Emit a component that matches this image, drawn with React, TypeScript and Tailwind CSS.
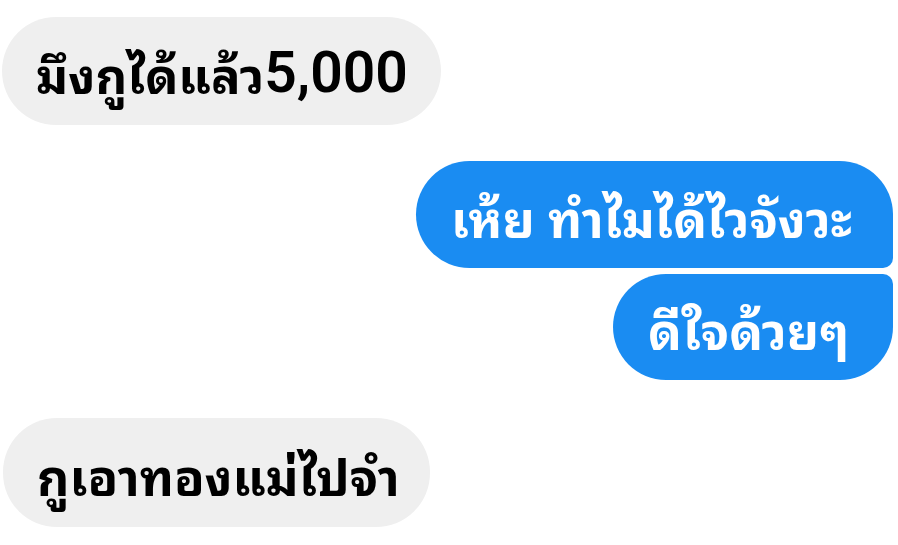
export default function App() {
  return (
    <div className="w-[898px] h-[545px] bg-white flex flex-col overflow-hidden font-['Noto_Sans_Thai_Looped','Noto_Sans_Thai','Roboto',sans-serif] font-bold text-[50px] leading-none whitespace-nowrap">
      <div className="mt-[17px] ml-[2px] w-[439px] h-[108px] rounded-[54px] bg-[#efefef] flex items-center pl-[34px] pt-[2px] text-black">
        <span className="text-[49px]">มึงกูได้แล้ว</span>
        <span className="font-['Roboto',sans-serif] font-semibold text-[57px]">5,000</span>
      </div>
      <div className="mt-[36px] self-end mr-[5px] w-[477px] h-[107px] bg-[#1a8cf2] rounded-l-[54px] rounded-tr-[54px] rounded-br-[10px] flex items-center pl-[35px] pt-[2px] text-white">
        เห้ย ทำไมได้ไวจังวะ
      </div>
      <div className="mt-[6px] self-end mr-[5px] w-[280px] h-[106px] bg-[#1a8cf2] rounded-l-[53px] rounded-tr-[10px] rounded-br-[53px] flex items-center pl-[35px] pt-[2px] text-white">
        ดีใจด้วยๆ
      </div>
      <div className="mt-[38px] ml-[3px] w-[427px] h-[109px] rounded-[54px] bg-[#efefef] flex items-center pl-[34px] pt-[2px] text-black">
        กูเอาทองแม่ไปจำ
      </div>
    </div>
  );
}
